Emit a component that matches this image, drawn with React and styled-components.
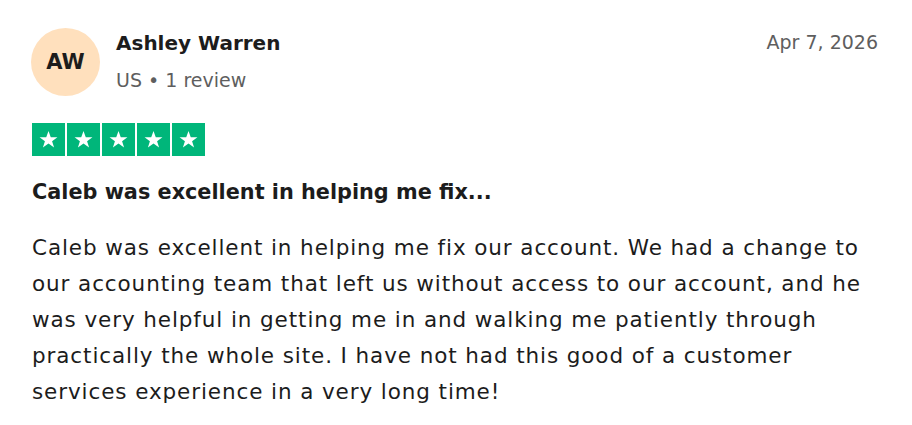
import styled, { createGlobalStyle } from "styled-components";

const GlobalStyle = createGlobalStyle`
  html, body {
    margin: 0;
    padding: 0;
    background: #ffffff;
  }
  body {
    font-family: "DejaVu Sans", "Noto Sans", Arial, sans-serif;
    color: #1c1c1c;
  }
`;

const Card = styled.article`
  box-sizing: border-box;
  width: 912px;
  padding: 28px 32px 24px 31px;
`;

const Header = styled.header`
  display: flex;
  align-items: flex-start;
  justify-content: space-between;
`;

const Consumer = styled.div`
  display: flex;
  align-items: flex-start;
  gap: 16px;
`;

const Avatar = styled.div`
  width: 69px;
  height: 68px;
  border-radius: 50%;
  background: #ffe0bd;
  color: #1c1c1c;
  display: flex;
  align-items: center;
  justify-content: center;
  font-size: 21px;
  font-weight: 700;
`;

const Info = styled.div`
  display: flex;
  flex-direction: column;
  gap: 13px;
  padding-top: 3px;
`;

const Name = styled.span`
  font-size: 20px;
  line-height: 24px;
  font-weight: 700;
  color: #1c1c1c;
`;

const Meta = styled.span`
  font-size: 19px;
  line-height: 24px;
  color: #5e5e5e;
`;

const DateText = styled.time`
  font-size: 19px;
  color: #5e5e5e;
  margin-top: 3px;
  margin-right: 2px;
`;

const Stars = styled.div`
  display: flex;
  gap: 2px;
  margin-top: 27px;
  margin-left: 1px;
`;

const StarBox = styled.div`
  width: 33px;
  height: 33px;
  background: #00b67a;
  display: flex;
  align-items: center;
  justify-content: center;
`;

const Title = styled.h2`
  margin: 24px 0 0 1px;
  font-size: 20.8px;
  font-weight: 700;
  color: #1c1c1c;
`;

const Body = styled.p`
  margin: 26px 0 0 1px;
  font-size: 21.5px;
  letter-spacing: 0.9px;
  line-height: 36px;
  color: #1c1c1c;
`;

const Star = () => (
  <StarBox>
    <svg width="21" height="21" viewBox="0 0 24 24">
      <path
        d="M12 2.2l2.6 7.2h7.6l-6.1 4.5 2.3 7.3L12 16.7l-6.4 4.5 2.3-7.3L1.8 9.4h7.6z"
        fill="#ffffff"
      />
    </svg>
  </StarBox>
);

export default function App() {
  return (
    <>
      <GlobalStyle />
      <Card>
        <Header>
          <Consumer>
            <Avatar>AW</Avatar>
            <Info>
              <Name>Ashley Warren</Name>
              <Meta>US • 1 review</Meta>
            </Info>
          </Consumer>
          <DateText>Apr 7, 2026</DateText>
        </Header>
        <Stars>
          {[0, 1, 2, 3, 4].map((i) => (
            <Star key={i} />
          ))}
        </Stars>
        <Title>Caleb was excellent in helping me fix...</Title>
        <Body>
          Caleb was excellent in helping me fix our account. We had a change to
          our accounting team that left us without access to our account, and he
          was very helpful in getting me in and walking me patiently through
          practically the whole site. I have not had this good of a customer
          services experience in a very long time!
        </Body>
      </Card>
    </>
  );
}
